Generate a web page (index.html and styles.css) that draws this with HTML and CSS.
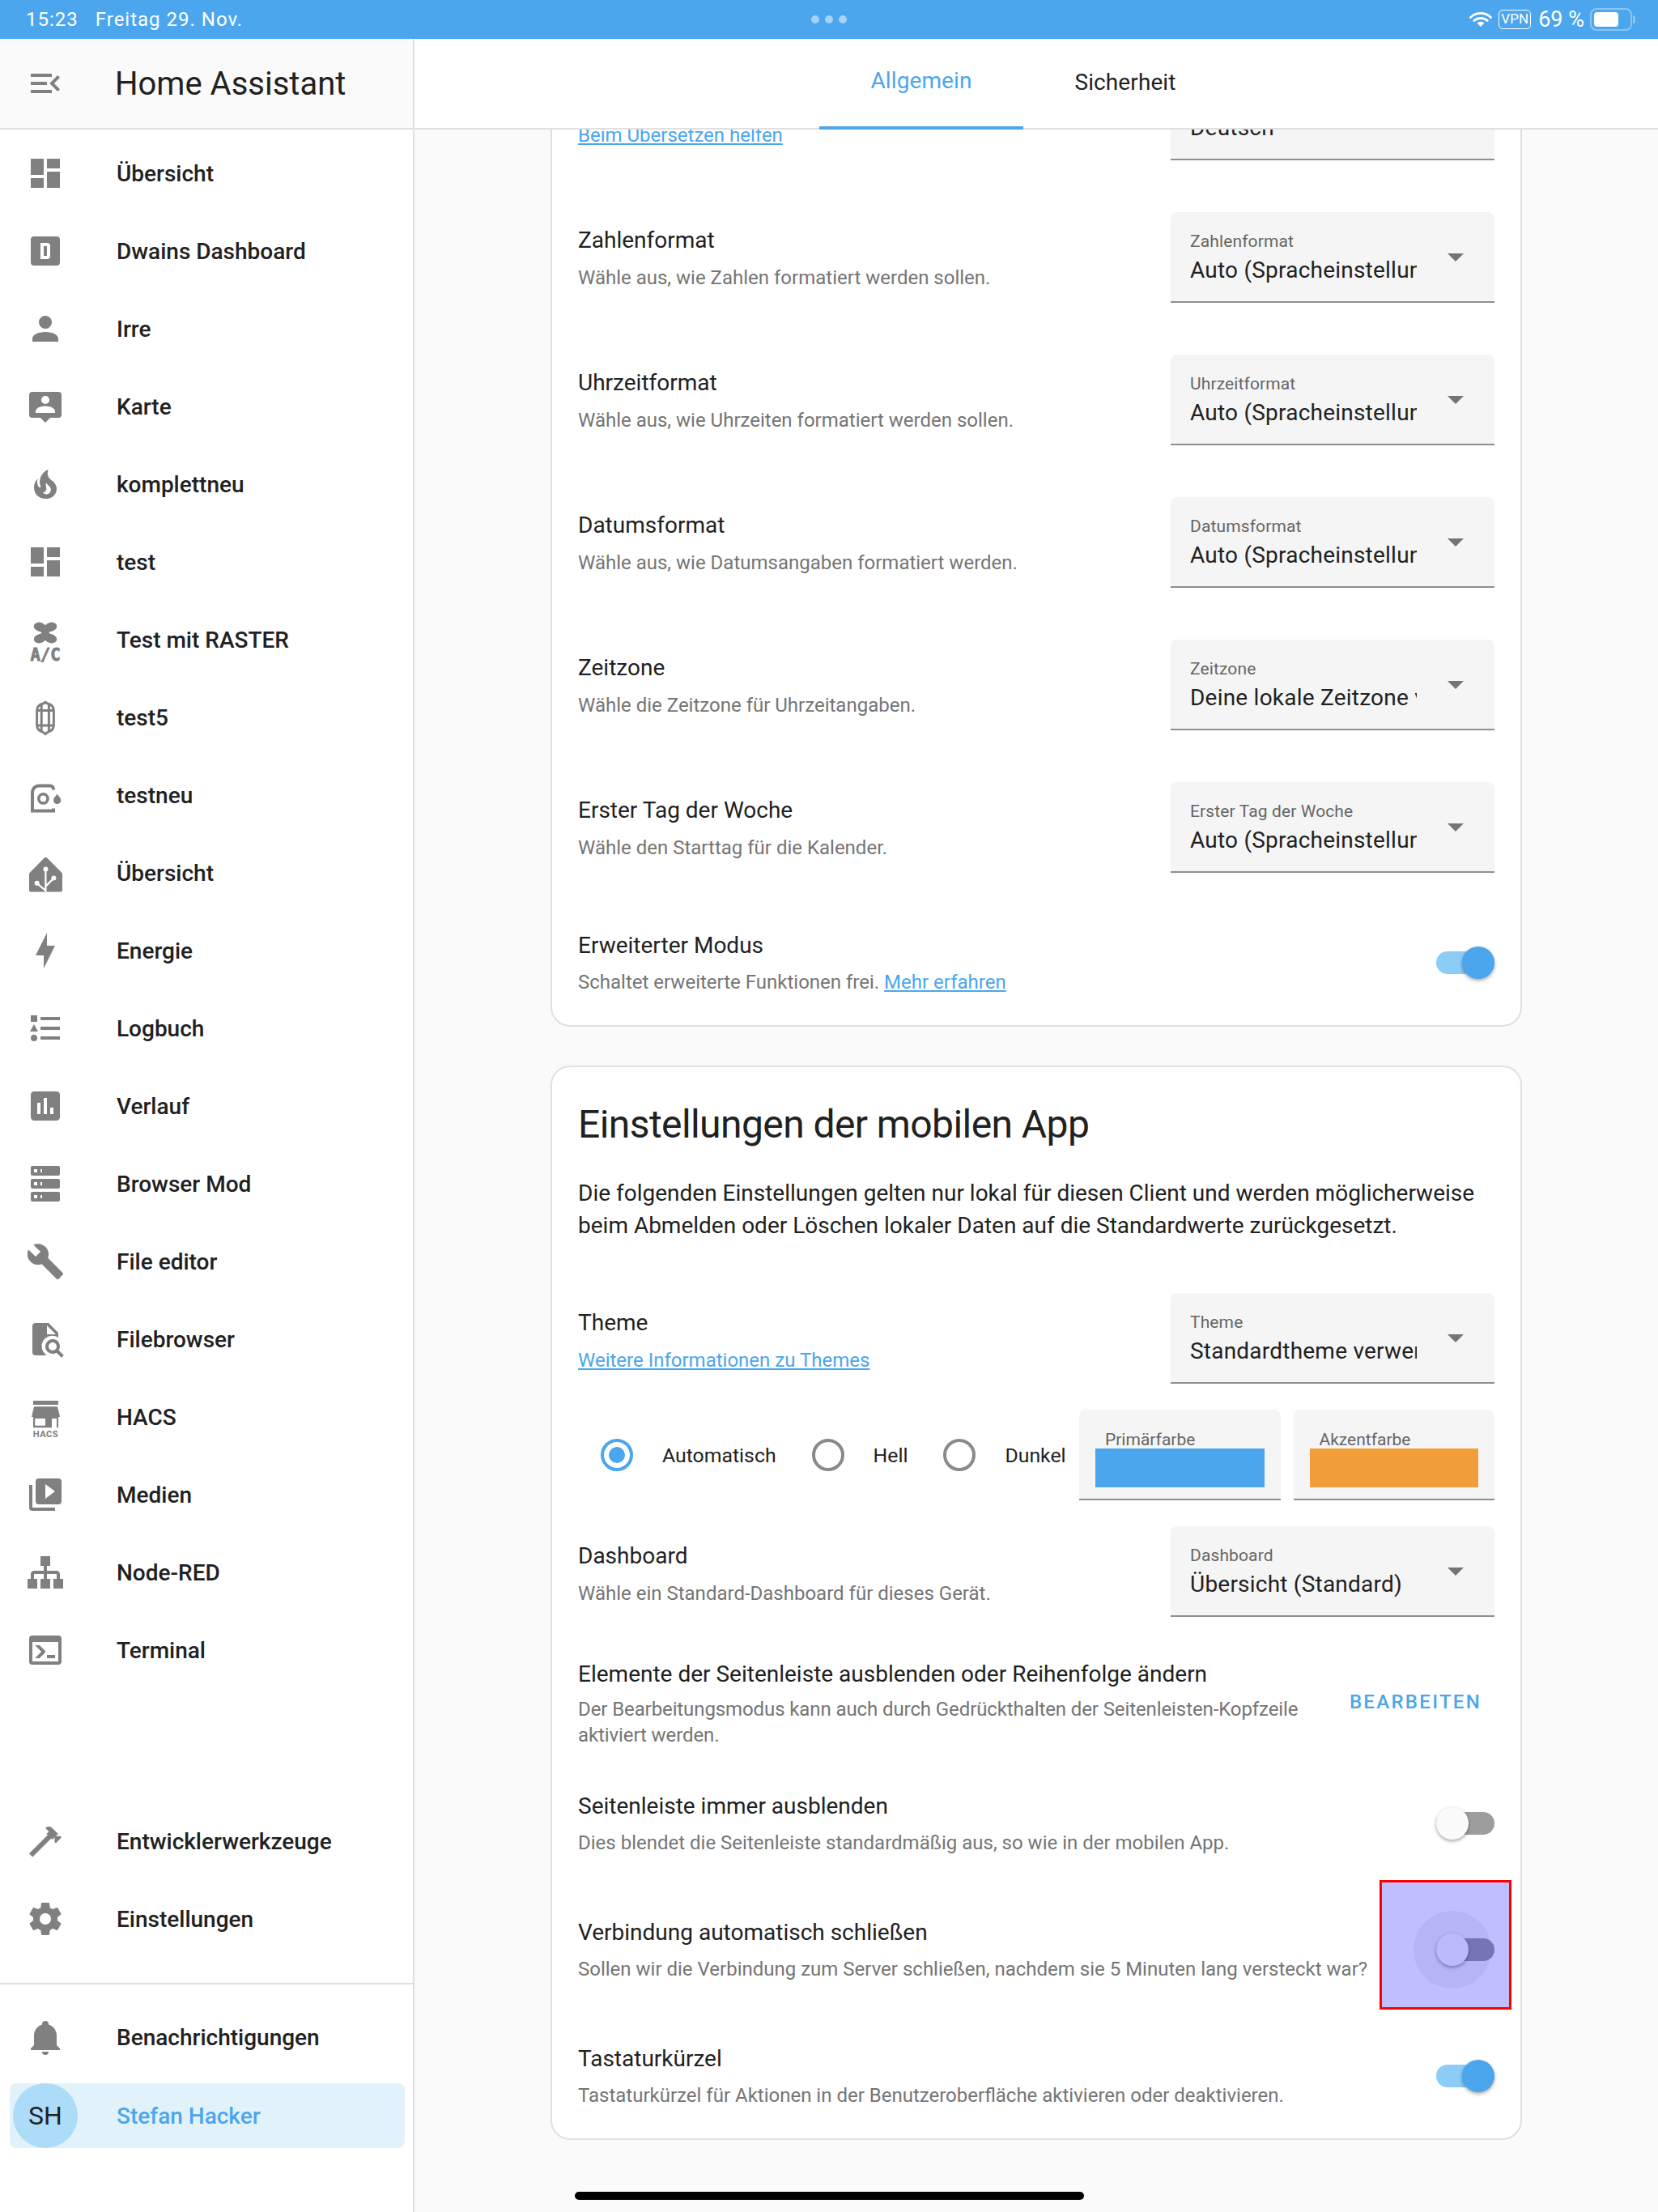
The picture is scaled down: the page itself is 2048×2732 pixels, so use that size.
FILE: index.html

```html
<!DOCTYPE html>
<html lang="de">
<head>
<meta charset="utf-8">
<title>Home Assistant</title>
<link rel="stylesheet" href="styles.css">
</head>
<body>
<div class="page">

<div class="status">
  <div class="status-left"><span>15:23</span><span>Freitag 29. Nov.</span></div>
  <div class="status-dots"><i></i><i></i><i></i></div>
  <div class="status-right">
    <svg class="wifi" viewBox="0 0 28 20"><path d="M1.5 7.5a18 18 0 0 1 25 0M5.8 11.6a12 12 0 0 1 16.4 0" fill="none" stroke="#fff" stroke-width="2.8" stroke-linecap="round"/><path d="M9.5 14.6a6.6 6.6 0 0 1 9 0L14 19z" fill="#fff"/></svg>
    <span class="vpn">VPN</span>
    <span class="batt-text">69 %</span>
    <span class="batt"><span class="batt-fill"></span></span><span class="batt-nub"></span>
  </div>
</div>

<div class="app">

  <aside class="side">
    <div class="side-head">
      <svg class="ico" viewBox="0 0 24 24"><path d="M21,15.61L19.59,17L14.58,12L19.59,7L21,8.39L17.44,12L21,15.61M3,6H16V8H3V6M3,13V11H13V13H3M3,18V16H16V18H3Z"/></svg>
      <div class="side-title">Home Assistant</div>
    </div>
    <nav class="nav">
      <a class="item"><svg class="ico" viewBox="0 0 24 24"><path d="M13,3V9H21V3M13,21H21V11H13M3,21H11V15H3M3,13H11V3H3V13Z"/></svg><span>Übersicht</span></a>
      <a class="item"><svg class="ico" viewBox="0 0 24 24"><path d="M9,7V17H13A2,2 0 0,0 15,15V9A2,2 0 0,0 13,7H9M11,9H13V15H11V9M5,3H19A2,2 0 0,1 21,5V19A2,2 0 0,1 19,21H5A2,2 0 0,1 3,19V5A2,2 0 0,1 5,3Z"/></svg><span>Dwains Dashboard</span></a>
      <a class="item"><svg class="ico" viewBox="0 0 24 24"><path d="M12,4A4,4 0 0,1 16,8A4,4 0 0,1 12,12A4,4 0 0,1 8,8A4,4 0 0,1 12,4M12,14C16.42,14 20,15.79 20,18V20H4V18C4,15.79 7.58,14 12,14Z"/></svg><span>Irre</span></a>
      <a class="item"><svg class="ico" viewBox="0 0 24 24"><path fill-rule="evenodd" d="M4,3H20A2,2 0 0,1 22,5V17A2,2 0 0,1 20,19H15L12,22L9,19H4A2,2 0 0,1 2,17V5A2,2 0 0,1 4,3ZM12,5.5A2.5,2.5 0 0,0 12,10.5A2.5,2.5 0 0,0 12,5.5ZM12,11.8C9,11.8 6,13.2 6,15V16H18V15C18,13.2 15,11.8 12,11.8Z"/></svg><span>Karte</span></a>
      <a class="item"><svg class="ico" viewBox="0 0 24 24"><path d="M17.66 11.2C17.43 10.9 17.15 10.64 16.89 10.38C16.22 9.78 15.46 9.35 14.82 8.72C13.33 7.26 13 4.85 13.95 3C13 3.23 12.17 3.75 11.46 4.32C8.87 6.4 7.85 10.07 9.07 13.22C9.11 13.32 9.15 13.42 9.15 13.55C9.15 13.77 9 13.97 8.8 14.05C8.57 14.15 8.33 14.09 8.14 13.93C8.08 13.88 8.04 13.83 8 13.76C6.87 12.33 6.69 10.28 7.45 8.64C5.78 10 4.87 12.3 5 14.47C5.06 14.97 5.12 15.47 5.29 15.97C5.43 16.57 5.7 17.17 6 17.7C7.08 19.43 8.95 20.67 10.96 20.92C13.1 21.19 15.39 20.8 17.03 19.32C18.86 17.66 19.5 15 18.56 12.72L18.43 12.46C18.22 12 17.66 11.2 17.66 11.2M14.5 17.5C14.22 17.74 13.76 18 13.4 18.1C12.28 18.5 11.16 17.94 10.5 17.28C11.69 17 12.4 16.12 12.61 15.23C12.78 14.43 12.46 13.77 12.33 13C12.21 12.26 12.23 11.63 12.5 10.94C12.69 11.32 12.89 11.7 13.13 12C13.9 13 15.11 13.44 15.37 14.8C15.41 14.94 15.43 15.08 15.43 15.23C15.46 16.05 15.1 16.95 14.5 17.5H14.5Z"/></svg><span>komplettneu</span></a>
      <a class="item"><svg class="ico" viewBox="0 0 24 24"><path d="M13,3V9H21V3M13,21H21V11H13M3,21H11V15H3M3,13H11V3H3V13Z"/></svg><span>test</span></a>
      <a class="item"><svg class="ico" viewBox="0 0 24 24"><ellipse cx="8.7" cy="4.2" rx="3.9" ry="2.8" transform="rotate(15 8.7 4.2)"/><ellipse cx="15.3" cy="4.2" rx="3.9" ry="2.8" transform="rotate(-15 15.3 4.2)"/><ellipse cx="8.7" cy="11.3" rx="3.9" ry="2.8" transform="rotate(-15 8.7 11.3)"/><ellipse cx="15.3" cy="11.3" rx="3.9" ry="2.8" transform="rotate(15 15.3 11.3)"/><path d="M8.5,4.5L15.5,11M15.5,4.5L8.5,11" stroke="#808080" stroke-width="3"/><text class="ac" x="12" y="25" text-anchor="middle">A/C</text></svg><span>Test mit RASTER</span></a>
      <a class="item"><svg class="ico" viewBox="0 0 24 24"><path d="M12,2.6L13.4,3.5C16.2,4.1 17.2,6 17.2,8V16.5C17.2,18.6 16.2,20.5 13.4,21.2L12,22.3L10.6,21.2C7.8,20.5 6.8,18.6 6.8,16.5V8C6.8,6 7.8,4.1 10.6,3.5ZM9.6,4V20.8M14.2,4V20.8M6.8,7.7H17.2M6.8,17H17.2" fill="none" stroke="#808080" stroke-width="1.5"/></svg><span>test5</span></a>
      <a class="item"><svg class="ico" viewBox="0 0 24 24"><path d="M17,8.7V8.2A2,2 0 0,0 15,6.2H8A4,4 0 0,0 4,10.2V21.7H17V20.3" fill="none" stroke="#808080" stroke-width="2"/><circle cx="10.7" cy="14.2" r="2.8" fill="none" stroke="#808080" stroke-width="1.8"/><path d="M19.3,11.4C20.5,13 21.6,14 21.6,15.2A2.3,2.3 0 0,1 17,15.2C17,14 18.1,13 19.3,11.4Z"/></svg><span>testneu</span></a>
      <a class="item"><svg class="ico" viewBox="0 0 24 24"><path d="M11.4,2.8A1.1,1.1 0 0,1 13,2.8L22.2,12Q22.5,12.3 22.5,13V22.8A1,1 0 0,1 21.5,23.8H3A1,1 0 0,1 2,22.8V13Q2,12.3 2.3,12Z"/><path d="M12.2,9.7V23.8M17.2,15.3L12.2,20.3M6.8,18.4L12.2,23" fill="none" stroke="#fff" stroke-width="1.1"/><circle cx="12.2" cy="9.7" r="1.5" fill="#fff"/><circle cx="17.2" cy="15.3" r="1.5" fill="#fff"/><circle cx="6.8" cy="18.4" r="1.5" fill="#fff"/></svg><span>Übersicht</span></a>
      <a class="item"><svg class="ico" viewBox="0 0 24 24"><path d="M11 15H6L13 1V9H18L11 23V15Z"/></svg><span>Energie</span></a>
      <a class="item"><svg class="ico" viewBox="0 0 24 24"><path d="M5,9.5L7.5,14H2.5L5,9.5M3,4H7V8H3V4M5,20A2,2 0 0,0 7,18A2,2 0 0,0 5,16A2,2 0 0,0 3,18A2,2 0 0,0 5,20M9,5V7H21V5H9M9,19H21V17H9V19M9,13H21V11H9V13Z"/></svg><span>Logbuch</span></a>
      <a class="item"><svg class="ico" viewBox="0 0 24 24"><path d="M19 3H5C3.9 3 3 3.9 3 5V19C3 20.1 3.9 21 5 21H19C20.1 21 21 20.1 21 19V5C21 3.9 20.1 3 19 3M9 17H7V10H9V17M13 17H11V7H13V17M17 17H15V13H17V17Z"/></svg><span>Verlauf</span></a>
      <a class="item"><svg class="ico" viewBox="0 0 24 24"><path d="M4,1H20A1,1 0 0,1 21,2V6A1,1 0 0,1 20,7H4A1,1 0 0,1 3,6V2A1,1 0 0,1 4,1M4,9H20A1,1 0 0,1 21,10V14A1,1 0 0,1 20,15H4A1,1 0 0,1 3,14V10A1,1 0 0,1 4,9M4,17H20A1,1 0 0,1 21,18V22A1,1 0 0,1 20,23H4A1,1 0 0,1 3,22V18A1,1 0 0,1 4,17M9,5H10V3H9V5M9,13H10V11H9V13M9,21H10V19H9V21M5,3V5H7V3H5M5,11V13H7V11H5M5,19V21H7V19H5Z"/></svg><span>Browser Mod</span></a>
      <a class="item"><svg class="ico" viewBox="0 0 24 24"><path d="M22.7,19L13.6,9.9C14.5,7.6 14,4.9 12.1,3C10.1,1 7.1,0.6 4.7,1.7L9,6L6,9L1.6,4.7C0.4,7.1 0.9,10.1 2.9,12.1C4.8,14 7.5,14.5 9.8,13.6L18.9,22.7C19.3,23.1 19.9,23.1 20.3,22.7L22.6,20.4C23.1,20 23.1,19.3 22.7,19Z"/></svg><span>File editor</span></a>
      <a class="item"><svg class="ico" viewBox="0 0 24 24"><path d="M14,2H6A2,2 0 0,0 4,4V20A2,2 0 0,0 6,22H13C12.59,21.75 12.2,21.44 11.86,21.1C9.22,18.67 9.05,14.56 11.5,11.92C13.69,9.5 17.33,9.13 20,11V8L14,2M13,9V3.5L18.5,9H13M20.31,18.9C21.64,16.79 21,14 18.91,12.68C16.8,11.35 14,12 12.69,14.08C11.35,16.19 12,18.97 14.09,20.3C15.55,21.23 17.41,21.23 18.88,20.32L22,23.39L23.39,22L20.31,18.9M16.5,19A2.5,2.5 0 0,1 14,16.5A2.5,2.5 0 0,1 16.5,14A2.5,2.5 0 0,1 19,16.5A2.5,2.5 0 0,1 16.5,19Z"/></svg><span>Filebrowser</span></a>
      <a class="item"><svg class="ico" viewBox="0 0 24 24"><path d="M4.5,2H20V4.5H4.5ZM5,5.6H19.5L21,12H3.5Z"/><path fill-rule="evenodd" d="M4.5,12H20V18.6H19V13H16V18.6H4.5ZM5.6,13V17.4H12V13Z"/><text class="hacs" x="12.2" y="24.5" text-anchor="middle">HACS</text></svg><span>HACS</span></a>
      <a class="item"><svg class="ico" viewBox="0 0 24 24"><path d="M4,6H2V20A2,2 0 0,0 4,22H18V20H4V6M20,2H8A2,2 0 0,0 6,4V16A2,2 0 0,0 8,18H20A2,2 0 0,0 22,16V4A2,2 0 0,0 20,2M12,14.5V5.5L18,10L12,14.5Z"/></svg><span>Medien</span></a>
      <a class="item"><svg class="ico" viewBox="0 0 24 24"><path d="M9,2V8H11V11H5C3.89,11 3,11.89 3,13V16H1V22H7V16H5V13H11V16H9V22H15V16H13V13H19V16H17V22H23V16H21V13C21,11.89 20.11,11 19,11H13V8H15V2H9Z"/></svg><span>Node-RED</span></a>
      <a class="item"><svg class="ico" viewBox="0 0 24 24"><path d="M20,19V7H4V19H20M20,3A2,2 0 0,1 22,5V19A2,2 0 0,1 20,21H4A2,2 0 0,1 2,19V5A2,2 0 0,1 4,3H20M13,17V15H18V17H13M9.58,13L5.57,9H8.4L11.7,12.3C12.09,12.69 12.09,13.33 11.7,13.72L8.42,17H5.59L9.58,13Z"/></svg><span>Terminal</span></a>
      <div class="nav-space"></div>
      <a class="item"><svg class="ico" viewBox="0 0 24 24"><path d="M2 19.63L13.43 8.2L12.72 7.5L14.14 6.07L12 3.89C13.2 2.7 15.09 2.7 16.27 3.89L19.87 7.5L18.45 8.91H21.29L22 9.62L18.45 13.21L17.74 12.5V9.62L16.27 11.04L15.56 10.33L4.13 21.76L2 19.63Z"/></svg><span>Entwicklerwerkzeuge</span></a>
      <a class="item"><svg class="ico" viewBox="0 0 24 24"><path d="M12,15.5A3.5,3.5 0 0,1 8.5,12A3.5,3.5 0 0,1 12,8.5A3.5,3.5 0 0,1 15.5,12A3.5,3.5 0 0,1 12,15.5M19.43,12.97C19.47,12.65 19.5,12.33 19.5,12C19.5,11.67 19.47,11.34 19.43,11L21.54,9.37C21.73,9.22 21.78,8.95 21.66,8.73L19.66,5.27C19.54,5.05 19.27,4.96 19.05,5.05L16.56,6.05C16.04,5.66 15.5,5.32 14.87,5.07L14.5,2.42C14.46,2.18 14.25,2 14,2H10C9.75,2 9.54,2.18 9.5,2.42L9.13,5.07C8.5,5.32 7.96,5.66 7.44,6.05L4.95,5.05C4.73,4.96 4.46,5.05 4.34,5.27L2.34,8.73C2.21,8.95 2.27,9.22 2.46,9.37L4.57,11C4.53,11.34 4.5,11.67 4.5,12C4.5,12.33 4.53,12.65 4.57,12.97L2.46,14.63C2.27,14.78 2.21,15.05 2.34,15.27L4.34,18.73C4.46,18.95 4.73,19.03 4.95,18.95L7.44,17.94C7.96,18.34 8.5,18.68 9.13,18.93L9.5,21.58C9.54,21.82 9.75,22 10,22H14C14.25,22 14.46,21.82 14.5,21.58L14.87,18.93C15.5,18.67 16.04,18.34 16.56,17.94L19.05,18.95C19.27,19.03 19.54,18.95 19.66,18.73L21.66,15.27C21.78,15.05 21.73,14.78 21.54,14.63L19.43,12.97Z"/></svg><span>Einstellungen</span></a>
    </nav>
    <div class="side-foot">
      <a class="item"><svg class="ico" viewBox="0 0 24 24"><path d="M21,19V20H3V19L5,17V11C5,7.9 7.03,5.17 10,4.29C10,4.19 10,4.1 10,4A2,2 0 0,1 12,2A2,2 0 0,1 14,4C14,4.1 14,4.19 14,4.29C16.97,5.17 19,7.9 19,11V17L21,19M14,21A2,2 0 0,1 12,23A2,2 0 0,1 10,21"/></svg><span>Benachrichtigungen</span></a>
      <a class="user"><span class="avatar">SH</span><span>Stefan Hacker</span></a>
    </div>
  </aside>

  <main class="main">
    <div class="tabs">
      <div class="tab active">Allgemein</div>
      <div class="tab">Sicherheit</div>
    </div>
    <div class="scroll">

      <section class="card card-first">
        <div class="row">
          <div class="text"><div class="title">&nbsp;</div><div class="desc"><a class="link">Beim Übersetzen helfen</a></div></div>
          <div class="select"><label>&nbsp;</label><div class="value">Deutsch</div><i class="arrow"></i></div>
        </div>
        <div class="row">
          <div class="text"><div class="title">Zahlenformat</div><div class="desc">Wähle aus, wie Zahlen formatiert werden sollen.</div></div>
          <div class="select"><label>Zahlenformat</label><div class="value">Auto (Spracheinstellung)</div><i class="arrow"></i></div>
        </div>
        <div class="row">
          <div class="text"><div class="title">Uhrzeitformat</div><div class="desc">Wähle aus, wie Uhrzeiten formatiert werden sollen.</div></div>
          <div class="select"><label>Uhrzeitformat</label><div class="value">Auto (Spracheinstellung)</div><i class="arrow"></i></div>
        </div>
        <div class="row">
          <div class="text"><div class="title">Datumsformat</div><div class="desc">Wähle aus, wie Datumsangaben formatiert werden.</div></div>
          <div class="select"><label>Datumsformat</label><div class="value">Auto (Spracheinstellung)</div><i class="arrow"></i></div>
        </div>
        <div class="row">
          <div class="text"><div class="title">Zeitzone</div><div class="desc">Wähle die Zeitzone für Uhrzeitangaben.</div></div>
          <div class="select"><label>Zeitzone</label><div class="value">Deine lokale Zeitzone verwenden</div><i class="arrow"></i></div>
        </div>
        <div class="row">
          <div class="text"><div class="title">Erster Tag der Woche</div><div class="desc">Wähle den Starttag für die Kalender.</div></div>
          <div class="select"><label>Erster Tag der Woche</label><div class="value">Auto (Spracheinstellung)</div><i class="arrow"></i></div>
        </div>
        <div class="row row-low">
          <div class="text"><div class="title">Erweiterter Modus</div><div class="desc">Schaltet erweiterte Funktionen frei. <a class="link">Mehr erfahren</a></div></div>
          <div class="switch on"><i class="track"></i><i class="knob"></i></div>
        </div>
      </section>

      <section class="card">
        <h2 class="card-title">Einstellungen der mobilen App</h2>
        <p class="card-intro">Die folgenden Einstellungen gelten nur lokal für diesen Client und werden möglicherweise beim Abmelden oder Löschen lokaler Daten auf die Standardwerte zurückgesetzt.</p>
        <div class="row row-theme">
          <div class="text"><div class="title">Theme</div><div class="desc"><a class="link">Weitere Informationen zu Themes</a></div></div>
          <div class="select"><label>Theme</label><div class="value">Standardtheme verwenden</div><i class="arrow"></i></div>
        </div>
        <div class="theme-opts">
          <div class="radio on"><i></i></div><span class="radio-label">Automatisch</span>
          <div class="radio"><i></i></div><span class="radio-label">Hell</span>
          <div class="radio"><i></i></div><span class="radio-label">Dunkel</span>
          <div class="pickers">
            <div class="picker"><label>Primärfarbe</label><div class="swatch blue"></div></div>
            <div class="picker"><label>Akzentfarbe</label><div class="swatch orange"></div></div>
          </div>
        </div>
        <div class="row row-dash">
          <div class="text"><div class="title">Dashboard</div><div class="desc">Wähle ein Standard-Dashboard für dieses Gerät.</div></div>
          <div class="select"><label>Dashboard</label><div class="value">Übersicht (Standard)</div><i class="arrow"></i></div>
        </div>
        <div class="row row-sidebar">
          <div class="text text-wide"><div class="title">Elemente der Seitenleiste ausblenden oder Reihenfolge ändern</div><div class="desc">Der Bearbeitungsmodus kann auch durch Gedrückthalten der Seitenleisten-Kopfzeile aktiviert werden.</div></div>
          <a class="btn">BEARBEITEN</a>
        </div>
        <div class="row row-low">
          <div class="text"><div class="title">Seitenleiste immer ausblenden</div><div class="desc">Dies blendet die Seitenleiste standardmäßig aus, so wie in der mobilen App.</div></div>
          <div class="switch"><i class="track"></i><i class="knob"></i></div>
        </div>
        <div class="row row-low">
          <div class="text"><div class="title">Verbindung automatisch schließen</div><div class="desc">Sollen wir die Verbindung zum Server schließen, nachdem sie 5 Minuten lang versteckt war?</div></div>
          <div class="switch"><i class="ripple"></i><i class="track"></i><i class="knob"></i></div>
        </div>
        <div class="row row-low">
          <div class="text"><div class="title">Tastaturkürzel</div><div class="desc">Tastaturkürzel für Aktionen in der Benutzeroberfläche aktivieren oder deaktivieren.</div></div>
          <div class="switch on"><i class="track"></i><i class="knob"></i></div>
        </div>
      </section>

    </div>
  </main>
</div>

<div class="mark"></div>
<div class="home-bar"></div>
</div>
</body>
</html>
```

FILE: styles.css

```css
* { box-sizing: border-box; }
html, body { margin: 0; padding: 0; }
body { font-family: Roboto, "Liberation Sans", sans-serif; color: #212121; background: #fafafa; }
a { color: inherit; text-decoration: none; }
i { display: block; }

.page { position: relative; width: 2048px; height: 2732px; overflow: hidden; display: flex; flex-direction: column; }

/* ios status bar */
.status { height: 48px; flex: none; background: #4ba6ee; color: #fff; display: grid; grid-template-columns: 1fr auto 1fr; align-items: center; padding: 0 28px 0 32px; font-size: 24px; }
.status-left { display: flex; gap: 21px; letter-spacing: 1px; }
.status-dots { display: flex; gap: 7px; margin-right: 4px; }
.status-dots i { width: 10px; height: 10px; border-radius: 50%; background: #a5d3f7; }
.status-right { display: flex; align-items: center; justify-content: flex-end; }
.wifi { width: 28px; height: 20px; margin-right: 8px; }
.vpn { width: 40px; height: 24px; border: 1.5px solid #fff; border-radius: 5px; font-size: 17px; line-height: 21px; text-align: center; margin-right: 9px; }
.batt-text { font-size: 27px; margin-right: 7px; }
.batt { width: 52px; height: 28px; border: 2px solid #8ac5f3; border-radius: 8px; padding: 3px; display: block; }
.batt-fill { display: block; width: 30px; height: 18px; background: #fff; border-radius: 4px; }
.batt-nub { width: 3px; height: 10px; background: #8ac5f3; border-radius: 0 3px 3px 0; margin-left: 1px; }

.app { flex: 1; display: flex; min-height: 0; }

/* sidebar */
.side { width: 512px; flex: none; background: #fff; border-right: 2px solid #e0e0e0; display: flex; flex-direction: column; }
.side-head { height: 112px; flex: none; background: #fafafa; border-bottom: 2px solid #e0e0e0; display: flex; align-items: center; padding-left: 32px; }
.side-title { font-size: 40px; margin-left: 62px; }
.ico { width: 48px; height: 48px; flex: none; fill: #808080; display: block; overflow: visible; }
.ac { font: 700 10.3px "DejaVu Sans Mono", monospace; fill: #808080; stroke: #808080; stroke-width: .4px; }
.hacs { font: 700 5.6px Roboto, sans-serif; fill: #808080; letter-spacing: .2px; }
.nav { flex: 1; display: flex; flex-direction: column; padding-top: 6px; }
.nav-space { flex: 1; }
.item { height: 96px; flex: none; display: flex; align-items: center; padding-left: 32px; font-size: 28px; font-weight: 500; }
.item span { margin-left: 64px; }
.side-foot { flex: none; height: 283px; border-top: 2px solid #e0e0e0; margin-top: 31px; padding-top: 17px; }
.user { height: 80px; margin: 9px 10px 0 12px; background: #e2f2fb; border-radius: 8px; display: flex; align-items: center; padding-left: 4px; color: #4ba6ee; font-size: 28px; font-weight: 500; }
.avatar { width: 80px; height: 80px; border-radius: 50%; background: #addcf8; color: #212121; display: flex; align-items: center; justify-content: center; font-size: 32px; font-weight: 400; margin-right: 48px; }

/* main */
.main { flex: 1; min-width: 0; display: flex; flex-direction: column; background: #fafafa; }
.tabs { height: 112px; flex: none; background: #fff; border-bottom: 2px solid #e0e0e0; display: flex; justify-content: center; padding-right: 32px; }
.tab { width: 252px; height: 112px; display: flex; align-items: center; justify-content: center; font-size: 28px; padding-bottom: 6px; letter-spacing: .1px; }
.tab.active { color: #4ba6ee; border-bottom: 4px solid #4ba6ee; }
.scroll { flex: 1; min-height: 0; overflow: hidden; padding-left: 168px; }

.card { width: 1200px; background: #fff; border: 2px solid #e0e0e0; border-radius: 24px; padding: 0 32px; margin-bottom: 48px; }
.card-first { margin-top: -108px; }
.card-title { font-size: 48px; font-weight: 400; letter-spacing: -.58px; line-height: 52px; margin: 0; padding-top: 45px; }
.card-intro { font-size: 28px; line-height: 40px; margin: 39px 0 31px; }

.row { display: flex; align-items: center; justify-content: space-between; padding: 32px 0; }
.row-low { padding: 34px 0 37px; }
.row-dash { padding-bottom: 13px; }
.row-sidebar { padding: 34px 0 14px; }
.text { padding-bottom: 4px; }
.row-low .text, .row-sidebar .text, .row-theme .text, .row-dash .text { padding-bottom: 0; }
.text-wide { width: 920px; }
.title { font-size: 28px; line-height: 48px; }
.desc { font-size: 24px; line-height: 32px; margin-top: 6px; color: #757575; }
.row-low .desc { margin-top: 5px; }
.row-sidebar .desc { margin-top: 3px; letter-spacing: -.1px; }
.link { color: #4ba6ee; text-decoration: underline; }

.select { width: 400px; height: 112px; flex: none; background: #f5f5f5; border-radius: 8px 8px 0 0; border-bottom: 2px solid #8f8f8f; padding: 24px 24px 0; position: relative; }
.select label { display: block; font-size: 21px; line-height: 24px; color: #666; letter-spacing: .12px; }
.value { font-size: 28px; line-height: 40px; margin-top: 4px; width: 280px; overflow: hidden; white-space: nowrap; letter-spacing: .22px; }
.arrow { position: absolute; right: 38px; top: 51px; border-left: 10px solid transparent; border-right: 10px solid transparent; border-top: 10px solid #757575; }

.theme-opts { display: flex; align-items: center; height: 112px; padding-left: 28px; }
.radio { width: 40px; height: 40px; flex: none; border: 4px solid #8a8a8a; border-radius: 50%; display: flex; align-items: center; justify-content: center; margin-left: 44px; }
.radio:first-child { margin-left: 0; }
.radio.on { border-color: #4ba6ee; }
.radio.on i { width: 20px; height: 20px; border-radius: 50%; background: #4ba6ee; }
.radio-label { font-size: 24.8px; margin-left: 36px; }
.pickers { display: flex; gap: 16px; margin-left: auto; }
.picker { width: 248.5px; height: 112px; background: #f5f5f5; border-radius: 8px 8px 0 0; border-bottom: 2px solid #8f8f8f; padding: 27px 20px 0; }
.picker label { display: block; font-size: 21px; line-height: 21px; color: #666; padding-left: 12px; }
.swatch { height: 48px; }
.swatch.blue { background: #4ba6ee; }
.swatch.orange { background: #f19e38; }

.btn { color: #4ba6ee; font-size: 24px; font-weight: 500; letter-spacing: 2.3px; margin-right: 16px; }

.switch { width: 72px; height: 40px; flex: none; position: relative; margin-top: 4px; }
.track { position: absolute; left: 0; right: 0; top: 6px; height: 28px; border-radius: 14px; background: #9d9d9d; }
.knob { position: absolute; left: 0; top: 0; width: 40px; height: 40px; border-radius: 50%; background: #fafafa; box-shadow: 0 2px 4px rgba(0,0,0,.35); }
.switch.on .track { background: #8ccdf7; }
.switch.on .knob { left: 32px; background: #4ba6ee; }
.ripple { position: absolute; left: -28px; top: -28px; width: 96px; height: 96px; border-radius: 50%; background: rgba(0,0,0,.05); }

/* highlight box and home indicator lie over the page */
.mark { position: absolute; left: 1704px; top: 2322px; width: 163px; height: 160px; border: 3px solid #f00; background: rgba(0,0,255,.25); }
.home-bar { position: absolute; left: 710px; top: 2707px; width: 629px; height: 10px; border-radius: 5px; background: #000; }
```
